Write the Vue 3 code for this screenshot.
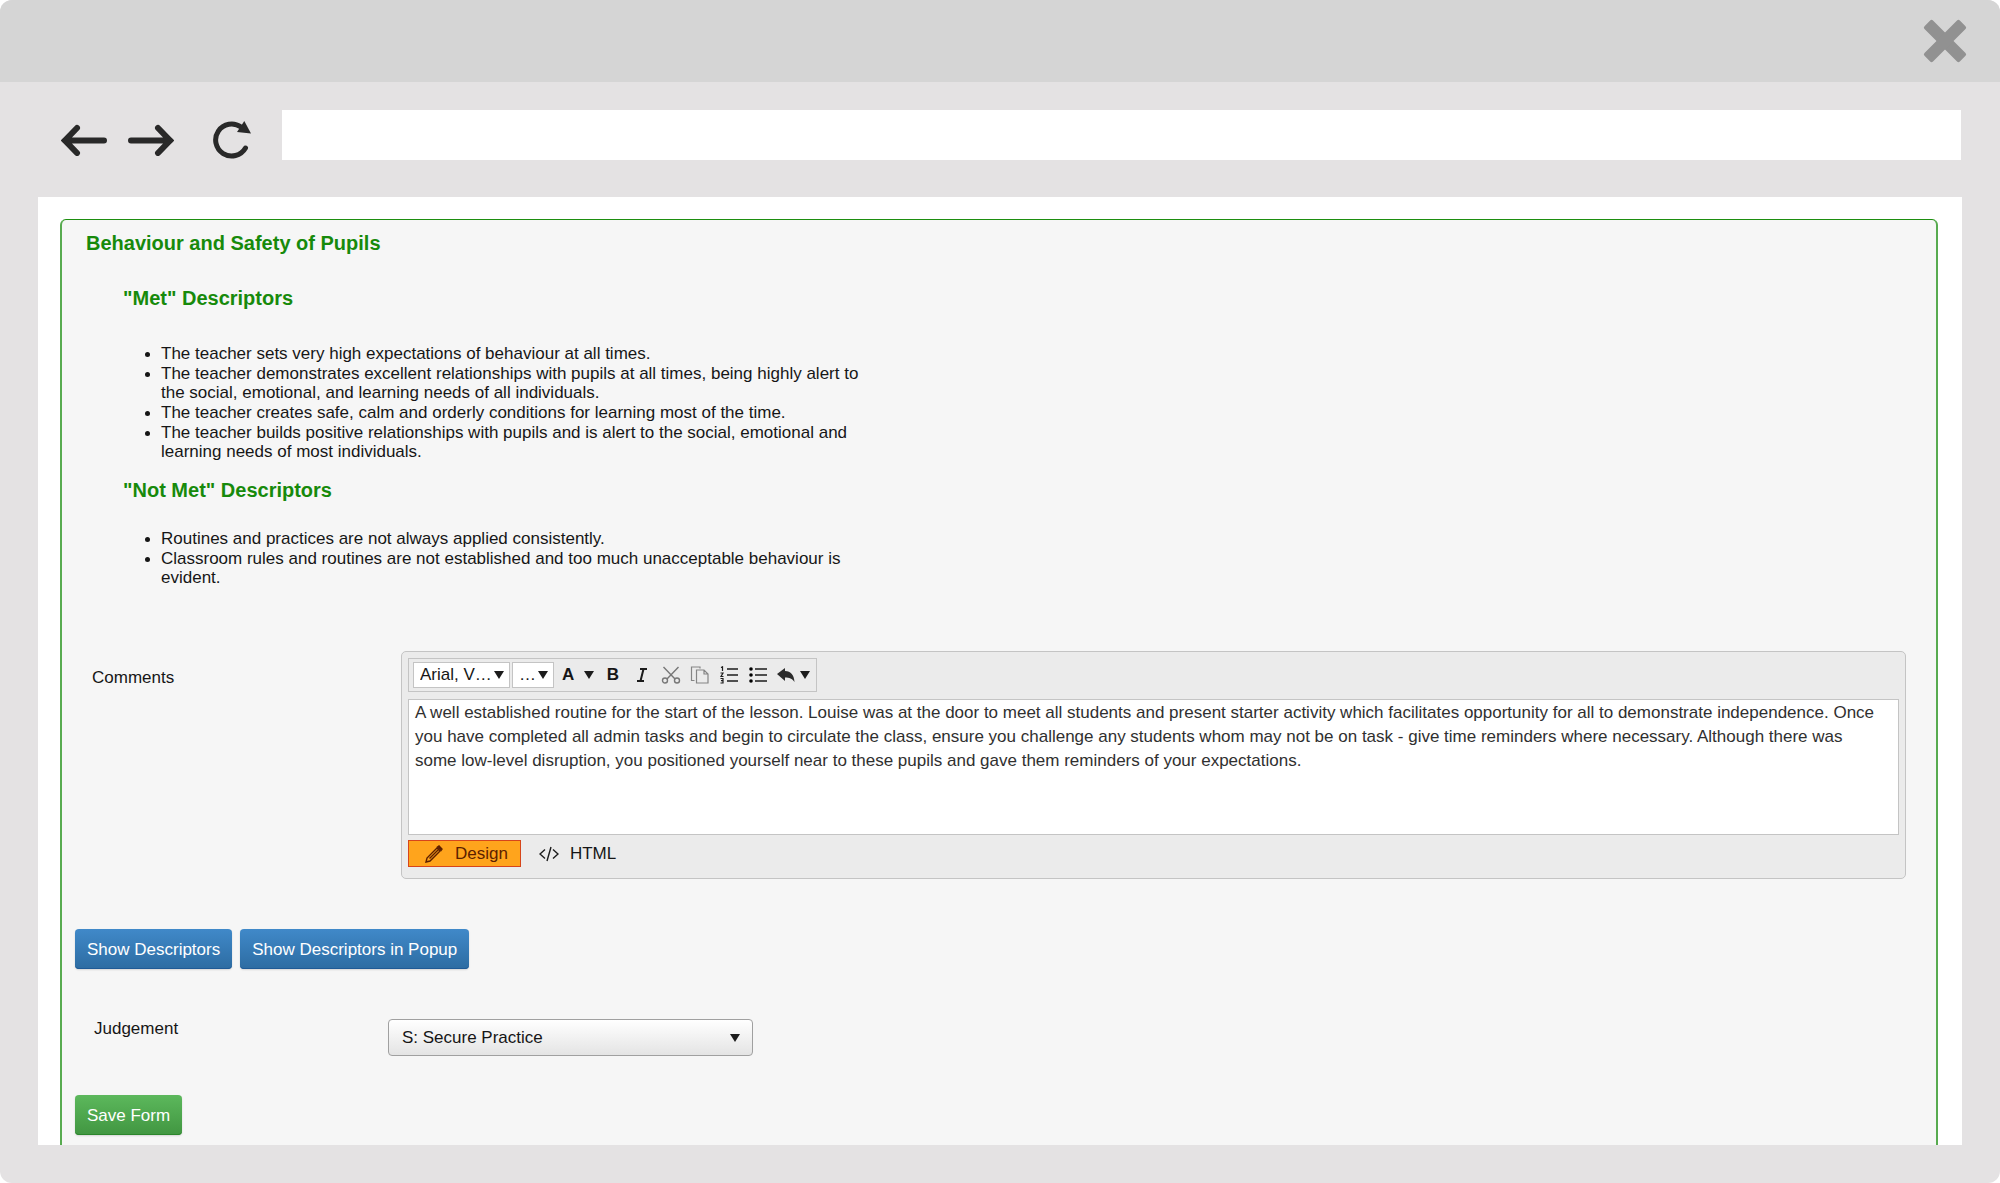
<script setup>
import { ref } from 'vue'

const address = ref('')
const font = ref('Arial, V…')
const size = ref('…')
const judgement = ref('S: Secure Practice')
const comments = ref(
  'A well established routine for the start of the lesson. Louise was at the door to meet all students and present starter activity which facilitates opportunity for all to demonstrate independence. Once you have completed all admin tasks and begin to circulate the class, ensure you challenge any students whom may not be on task - give time reminders where necessary. Although there was some low-level disruption, you positioned yourself near to these pupils and gave them reminders of your expectations.'
)

const met = [
  'The teacher sets very high expectations of behaviour at all times.',
  'The teacher demonstrates excellent relationships with pupils at all times, being highly alert to the social, emotional, and learning needs of all individuals.',
  'The teacher creates safe, calm and orderly conditions for learning most of the time.',
  'The teacher builds positive relationships with pupils and is alert to the social, emotional and learning needs of most individuals.'
]
const notMet = [
  'Routines and practices are not always applied consistently.',
  'Classroom rules and routines are not established and too much unacceptable behaviour is evident.'
]
</script>

<template>
  <div class="window">
    <header class="titlebar">
      <button class="plain" type="button" aria-label="Close">
        <svg width="44" height="44" viewBox="0 0 44 44" fill="#919191">
          <rect x="-3" y="16" width="50" height="12" rx="2" transform="rotate(45 22 22)" />
          <rect x="-3" y="16" width="50" height="12" rx="2" transform="rotate(-45 22 22)" />
        </svg>
      </button>
    </header>

    <nav class="navbar">
      <div class="nav-icons">
        <button class="plain" type="button" aria-label="Back">
          <svg width="46" height="32" viewBox="0 0 46 32">
            <path d="M4 16.500H43M16 4L4 16.500L16 29" class="nav-stroke" />
            <path d="M0 16.500L11 7V26Z" fill="#292929" />
          </svg>
        </button>
        <button class="plain" type="button" aria-label="Forward">
          <svg width="46" height="32" viewBox="0 0 46 32">
            <path d="M3 16.500H42M30 4L42 16.500L30 29" class="nav-stroke" />
            <path d="M46 16.500L35 7V26Z" fill="#292929" />
          </svg>
        </button>
        <button class="plain reload" type="button" aria-label="Reload">
          <svg width="38" height="38" viewBox="0 0 38 38">
            <path d="M32.500 27A16 16 0 1 1 28 6" class="nav-stroke thin" />
            <path d="M31.300 0L38 12.500L24 11Z" fill="#292929" />
          </svg>
        </button>
      </div>
      <input v-model="address" class="address" type="text" aria-label="Address" />
    </nav>

    <main class="page">
      <form class="panel" @submit.prevent>
        <h1>Behaviour and Safety of Pupils</h1>

        <section class="descriptors">
          <h2>"Met" Descriptors</h2>
          <ul class="met">
            <li v-for="item in met" :key="item"><span>{{ item }}</span></li>
          </ul>
          <h2>"Not Met" Descriptors</h2>
          <ul class="not-met">
            <li v-for="item in notMet" :key="item"><span>{{ item }}</span></li>
          </ul>
        </section>

        <div class="comments">
          <label for="comments">Comments</label>
          <div class="editor">
            <div class="tools">
              <span class="pick font">
                <select v-model="font" aria-label="Font"><option>Arial, V…</option></select>
                <svg class="caret" width="10" height="8" viewBox="0 0 10 8"><path d="M0 0H10L5 8Z" /></svg>
              </span>
              <span class="pick size">
                <select v-model="size" aria-label="Size"><option>…</option></select>
                <svg class="caret" width="10" height="8" viewBox="0 0 10 8"><path d="M0 0H10L5 8Z" /></svg>
              </span>
              <button class="plain colour" type="button" aria-label="Text colour">
                <b>A</b>
                <svg width="10" height="8" viewBox="0 0 10 8"><path d="M0 0H10L5 8Z" fill="#1c1c1c" /></svg>
              </button>
              <button class="plain tool" type="button" aria-label="Bold"><b>B</b></button>
              <button class="plain tool" type="button" aria-label="Italic">
                <svg width="20" height="18" viewBox="0 0 20 18">
                  <path d="M8 3H15M5 15H12M11.500 3L8.500 15" fill="none" stroke="#1c1c1c" stroke-width="2" />
                </svg>
              </button>
              <button class="plain tool" type="button" aria-label="Cut">
                <svg width="20" height="18" viewBox="0 0 20 18" fill="none" stroke="#777" stroke-width="1.400">
                  <path d="M2.500 1L14 13M17.500 1L6 13" />
                  <circle cx="4" cy="14.500" r="2.500" />
                  <circle cx="16" cy="14.500" r="2.500" />
                </svg>
              </button>
              <button class="plain tool" type="button" aria-label="Copy">
                <svg width="20" height="18" viewBox="0 0 20 18" fill="none" stroke="#858585" stroke-width="1.200">
                  <path d="M4.500 14.500H1.500V1H10V2.500M6.500 4H14L18 8V17H6.500ZM14 4V8H18" />
                </svg>
              </button>
              <button class="plain tool" type="button" aria-label="Numbered list">
                <svg width="20" height="18" viewBox="0 0 20 18" fill="none" stroke="#1c1c1c">
                  <path d="M8 3H19M8 9H19M8 15H19" stroke-width="1.500" />
                  <path d="M2 1.500L3.500 .8V5M1.500 7H4L2 10.500H4.500M1.500 12.500H4V17H1.500M2 14.700H4" stroke-width="1.200" />
                </svg>
              </button>
              <button class="plain tool" type="button" aria-label="Bulleted list">
                <svg width="20" height="18" viewBox="0 0 20 18">
                  <path d="M7 3H19M7 9H19M7 15H19" stroke="#1c1c1c" stroke-width="1.500" />
                  <circle cx="3" cy="3" r="1.800" />
                  <circle cx="3" cy="9" r="1.800" />
                  <circle cx="3" cy="15" r="1.800" />
                </svg>
              </button>
              <button class="plain undo" type="button" aria-label="Undo">
                <svg width="18" height="16" viewBox="0 0 18 16" fill="#2c2c2c">
                  <path d="M0 7L8 1V4C14 4 17 8 17.500 15C15 11.500 12.500 10.500 8 10.500V14Z" />
                </svg>
                <svg width="10" height="8" viewBox="0 0 10 8"><path d="M0 0H10L5 8Z" fill="#1c1c1c" /></svg>
              </button>
            </div>
            <textarea id="comments" v-model="comments" spellcheck="false"></textarea>
            <div class="modes">
              <button class="mode active" type="button">
                <svg width="18" height="18" viewBox="0 0 18 18" fill="none" stroke="#5c1f00" stroke-width="1.400">
                  <path d="M1 17L2 13L12 3L15 6L5 16ZM4.500 13.500L13 5" />
                  <path d="M12.500 2L14 1L17 4L16 5.500Z" fill="#5c1f00" />
                </svg>
                Design
              </button>
              <button class="mode" type="button">
                <svg width="20" height="16" viewBox="0 0 20 16" fill="none" stroke="#1c1c1c" stroke-width="1.400">
                  <path d="M6 3.500L1 8L6 12.500M14 3.500L19 8L14 12.500M12 1L8 15" />
                </svg>
                HTML
              </button>
            </div>
          </div>
        </div>

        <div class="actions">
          <button class="btn blue" type="button">Show Descriptors</button>
          <button class="btn blue" type="button">Show Descriptors in Popup</button>
        </div>

        <div class="judgement">
          <label for="judgement">Judgement</label>
          <span class="pick level">
            <select id="judgement" v-model="judgement"><option>S: Secure Practice</option></select>
            <svg class="caret" width="10" height="8" viewBox="0 0 10 8"><path d="M0 0H10L5 8Z" /></svg>
          </span>
        </div>

        <button class="btn green" type="submit">Save Form</button>
      </form>
    </main>
  </div>
</template>

<style>
body {
  margin: 0;
  background: #fff;
}
</style>

<style scoped>
.window,
.window * {
  box-sizing: border-box;
}
.window {
  overflow: hidden;
  padding-bottom: 38px;
  border-radius: 12px;
  background: #e4e2e3;
  color: #161616;
  font: 17px/20px "Liberation Sans", Arial, sans-serif;
}
button,
input,
select,
textarea {
  margin: 0;
  color: inherit;
  font: inherit;
}
svg {
  display: block;
  flex: none;
}
.plain {
  display: flex;
  align-items: center;
  justify-content: center;
  padding: 0;
  border: 0;
  background: none;
}

.titlebar {
  display: flex;
  align-items: center;
  justify-content: flex-end;
  height: 82px;
  padding-right: 33px;
  background: #d5d5d5;
}

.navbar {
  display: flex;
  align-items: center;
  padding: 28px 39px 37px 61px;
}
.nav-icons {
  display: flex;
  align-items: center;
  gap: 21px;
  width: 221px;
  padding-top: 10px;
}
.reload {
  margin-left: 18px;
}
.nav-stroke {
  fill: none;
  stroke: #292929;
  stroke-width: 6;
  stroke-linecap: round;
}
.nav-stroke.thin {
  stroke-width: 5;
}
.address {
  flex: 1;
  min-width: 0;
  height: 50px;
  padding: 0 16px;
  border: 0;
  background: #fff;
}

.page {
  margin: 0 38px;
  padding: 22px 24px 0 22px;
  background: #fff;
}
.panel {
  padding: 11px 30px 10px 13px;
  border: 2px solid #58ab50;
  border-top: 1px solid #1d8e0f;
  border-bottom: 0;
  border-radius: 6px 6px 0 0;
  background: #f6f6f6;
}
h1,
h2 {
  margin: 0;
  color: #178a0b;
  font-size: 20px;
  line-height: 24px;
}
h1 {
  padding-left: 11px;
}
.descriptors {
  max-width: 796px;
  padding: 31px 0 0 48px;
}
ul {
  display: flex;
  flex-direction: column;
  gap: 1px;
  margin: 0;
  padding: 0 0 0 22px;
  line-height: 19px;
  list-style: none;
}
.met {
  margin: 34px 0 17px;
}
.not-met {
  margin-top: 27px;
}
li {
  display: flex;
  gap: 11px;
}
li::before {
  content: "";
  flex: none;
  width: 5px;
  height: 5px;
  margin-top: 8px;
  border-radius: 50%;
  background: #161616;
}

.comments {
  display: flex;
  margin-top: 64px;
}
.comments label {
  width: 326px;
  padding: 17px 0 0 17px;
}
.editor {
  flex: 1;
  min-width: 0;
  padding: 6px;
  border: 1px solid #c4c4c4;
  border-radius: 5px;
  background: #ebebeb;
}
.tools {
  display: flex;
  align-items: center;
  width: max-content;
  height: 34px;
  padding: 0 6px 0 4px;
  border: 1px solid #c4c4c4;
}
.pick {
  display: grid;
  align-items: center;
}
.pick select,
.pick .caret {
  grid-area: 1 / 1;
}
.pick select {
  appearance: none;
  width: 100%;
  height: 26px;
  padding: 0 0 0 6px;
  border: 1px solid #c4c4c4;
  border-radius: 0;
  background: #fff;
}
.caret {
  justify-self: end;
  margin-right: 6px;
  fill: #1c1c1c;
  pointer-events: none;
}
.font {
  width: 97px;
  margin-right: 2px;
}
.size {
  width: 42px;
  margin-right: 8px;
}
.colour {
  gap: 10px;
  margin-right: 4px;
}
.tool {
  width: 29px;
}
.undo {
  gap: 5px;
  margin-left: 5px;
}
textarea {
  display: block;
  width: 100%;
  height: 136px;
  margin-top: 7px;
  padding: 1px 20px 1px 6px;
  border: 1px solid #c4c4c4;
  outline: 0;
  background: #fff;
  color: #303030;
  line-height: 24px;
  resize: none;
}
.modes {
  display: flex;
  gap: 8px;
  margin-top: 5px;
  padding-bottom: 5px;
}
.mode {
  display: flex;
  align-items: center;
  gap: 11px;
  height: 27px;
  padding: 0 9px;
  border: 1px solid transparent;
  background: none;
}
.mode.active {
  gap: 12px;
  padding: 0 12px 0 16px;
  border-color: #d6451b;
  background: #ffa41c;
  color: #5c1f00;
}

.actions {
  display: flex;
  gap: 8px;
  margin-top: 50px;
}
.btn {
  height: 40px;
  padding: 1px 12px 0;
  border: 0;
  border-radius: 4px;
  color: #fff;
  white-space: nowrap;
}
.blue {
  background: linear-gradient(#4089c9, #2d6ca2);
  box-shadow: inset 0 -1px #1f5a96, 0 1px 2px #0002;
}
.green {
  margin-top: 39px;
  background: linear-gradient(#5cb85c, #419641);
  box-shadow: inset 0 -1px #2b862b, 0 1px 2px #0002;
}

.judgement {
  display: flex;
  margin-top: 50px;
}
.judgement label {
  width: 313px;
  padding-left: 19px;
}
.level {
  width: 365px;
}
.pick.level select {
  height: 37px;
  padding-left: 13px;
  border-color: #a0a0a0;
  border-radius: 4px;
  background: linear-gradient(#fff, #e4e4e4);
}
.level .caret {
  margin-right: 13px;
}
</style>
